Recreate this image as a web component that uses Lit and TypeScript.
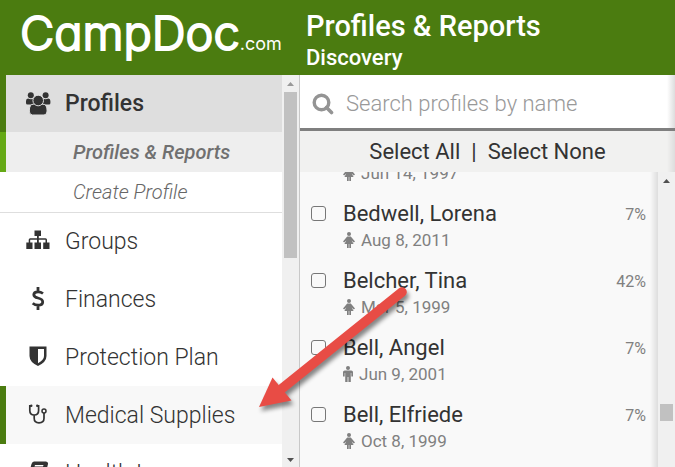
import { LitElement, html, css, svg, nothing } from "lit";
import { customElement } from "lit/decorators.js";
import { classMap } from "lit/directives/class-map.js";

const icons: Record<string, unknown> = {
  users: svg`<circle cx="4.800" cy="3.200" r="3"/><circle cx="19.600" cy="3.200" r="3"/><path d="M0 11V9Q0 6.500 2 6.500Q5 8 8 6.500V12.500H1.500Q0 12.500 0 11ZM24.400 11V9Q24.400 6.500 22.400 6.500Q19.400 8 16.400 6.500V12.500H22.900Q24.400 12.500 24.400 11Z"/><path stroke="#dedede" d="M3.300 19Q3.300 12 7.500 12.200H16.900Q21.100 12 21.100 19Q21.100 23 18 23H6.500Q3.300 23 3.300 19Z"/><circle stroke="#dedede" cx="12.200" cy="8.500" r="5.300"/>`,
  groups: svg`<path d="M8.500 1.500H15V7H12.800V9.200H19.500Q21 9.200 21 10.700V13.500H23.500V20H17.200V13.500H19.500V10.800H12.800V13.500H15V20H8.500V13.500H11V10.800H4.200V13.500H6.500V20H.300V13.500H2.700V10.700Q2.700 9.200 4.200 9.200H11V7H8.500Z"/>`,
  money: svg`<path d="M17 6.500Q14.800 4.800 12 4.800Q7.800 4.800 7.800 7.700Q7.800 10 12 11Q16.700 12.200 16.700 15Q16.700 18.200 12.200 18.200Q9 18.200 6.700 16.200M12 0V5M12 18V23" fill="none" stroke="currentColor" stroke-width="2.800"/>`,
  shield: svg`<path fill-rule="evenodd" d="M3.500 1.500H20.500V11Q20.500 17 12 21Q3.500 17 3.500 11ZM12 4V18.200Q18 15 18 11V4Z"/>`,
  stethoscope: svg`<path d="M5.200 2.800H3.800V7.500Q3.800 12 8.200 12Q12.600 12 12.600 7.500V2.800H11.200M8.200 12V15.200Q8.200 19.800 13 19.800Q18 19.800 18 15.200V10" fill="none" stroke="currentColor" stroke-width="1.700"/><circle cx="5.300" cy="2.800" r="1.200"/><circle cx="11.200" cy="2.800" r="1.200"/><circle cx="18" cy="8" r="2" fill="none" stroke="currentColor" stroke-width="1.500"/>`,
  book: svg`<path fill-rule="evenodd" d="M8 .500H20Q22.500 1 22 3L18.500 17Q18 20 15 20H4Q1 19 2 16L5.500 3Q6.200 .500 8 .500ZM9 4L8.500 5.500H17L17.500 4ZM8 7.500L7.500 9H16L16.500 7.500Z"/>`,
};

interface NavItem {
  label: string;
  icon: string;
  hover?: boolean;
}

const navItems: NavItem[] = [
  { label: "Groups", icon: "groups" },
  { label: "Finances", icon: "money" },
  { label: "Protection Plan", icon: "shield" },
  { label: "Medical Supplies", icon: "stethoscope", hover: true },
  { label: "Health Logs", icon: "book" },
];

interface Profile {
  name?: string;
  born: string;
  sex: "f" | "m";
  done?: string;
}

const profiles: Profile[] = [
  { born: "Jun 14, 1997", sex: "f" },
  { name: "Bedwell, Lorena", born: "Aug 8, 2011", sex: "f", done: "7%" },
  { name: "Belcher, Tina", born: "Mar 5, 1999", sex: "f", done: "42%" },
  { name: "Bell, Angel", born: "Jun 9, 2001", sex: "m", done: "7%" },
  { name: "Bell, Elfriede", born: "Oct 8, 1999", sex: "f", done: "7%" },
];

@customElement("side-nav")
export class SideNav extends LitElement {
  static styles = css`
    :host { display: flex; min-height: 0; overflow: hidden; border-right: 1px solid #c8c8c8; background: #fff; }
    nav { flex: 1; min-width: 0; overflow: hidden; }
    a { display: flex; align-items: center; height: 58px; box-sizing: border-box; padding-left: 20px;
      border-left: 6px solid transparent; color: #333; text-decoration: none; font-size: 23px; font-weight: 300; white-space: nowrap; }
    .icon { width: 24px; height: 24px; flex: none; margin-right: 15px; fill: currentColor; overflow: visible; }
    .section { height: 57px; background: #dedede; border-color: #4b7c10; font-weight: 500; }
    .sub { height: 40px; padding-left: 67px; font-size: 20px; font-style: italic; color: #666; }
    .current { background: #eee; border-color: #65a915; font-weight: 500; color: #707070; }
    .hover { background: #f8f8f8; border-color: #4b7c10; }
    .rest { box-shadow: inset 0 1px #dedede; }
    .track { width: 17px; flex: none; background: #f0f0f0; display: flex; flex-direction: column; align-items: center; }
    .arrow { width: 7px; height: 4px; margin: 7px 0 6px; fill: #999; }
    .thumb { width: 13px; height: 166px; background: #c1c1c1; }
    .down { margin: auto 0 5px; fill: #505050; }
  `;
  icon(name: string) {
    return html`<svg class="icon" viewBox="0 0 24 24" aria-hidden="true">${icons[name]}</svg>`;
  }
  render() {
    return html`
      <nav aria-label="Main">
        <a class="section" href="#profiles">${this.icon("users")}Profiles</a>
        <a class="sub current" href="#reports" aria-current="page">Profiles &amp; Reports</a>
        <a class="sub" href="#create">Create Profile</a>
        <div class="rest">
          ${navItems.map((n) => html`<a class=${classMap({ hover: !!n.hover })} href="#${n.icon}">${this.icon(n.icon)}${n.label}</a>`)}
        </div>
      </nav>
      <div class="track" aria-hidden="true">
        <svg class="arrow" viewBox="0 0 7 4"><path d="M0 4L3.500 0L7 4Z"/></svg>
        <div class="thumb"></div>
        <svg class="arrow down" viewBox="0 0 7 4"><path d="M0 0L3.500 4L7 0Z"/></svg>
      </div>`;
  }
}

@customElement("profile-list")
export class ProfileList extends LitElement {
  static styles = css`
    :host { display: flex; flex-direction: column; min-width: 0; min-height: 0; background: #f9f9f9; }
    .search { display: flex; align-items: center; height: 53px; padding: 4px 12px 0; background: linear-gradient(to left, #ddd, #fff 8px); box-sizing: border-box; }
    .glass { width: 22px; height: 22px; flex: none; fill: none; stroke: #949494; margin-right: 12px; }
    input[type="search"] { flex: 1; min-width: 0; border: 0; padding: 0; background: none; outline: 0; font: 300 22px Roboto, sans-serif; color: #333; }
    input::placeholder { color: #999; opacity: 1; }
    .picks { display: flex; align-items: center; justify-content: center; gap: 11px; height: 44px; box-sizing: border-box;
      border-top: 3px solid #7f7f7f; background: linear-gradient(to left, #ddd, #f1f1f0 8px); font-size: 22px; color: #333; }
    .picks button { border: 0; padding: 0; background: none; font: inherit; color: inherit; cursor: pointer; }
    .body { flex: 1; min-height: 0; display: flex; overflow: hidden; }
    .scroll { flex: 1; min-width: 0; overflow: hidden; display: flex; flex-direction: column; justify-content: flex-end; background: linear-gradient(to left, #ddd, #f9f9f9 8px); }
    ul { margin: 0; padding: 0 0 11px; list-style: none; }
    li { display: flex; align-items: flex-start; height: 67px; box-sizing: border-box; padding: 12px 12px 0 11px; }
    input[type="checkbox"] { appearance: none; width: 15px; height: 15px; margin: 6px 17px 0 0; box-sizing: border-box; border: 1px solid #777; border-radius: 3px; background: none; flex: none; }
    .who { flex: 1; min-width: 0; }
    label { display: block; height: 28px; font-size: 22px; line-height: 28px; color: #333; white-space: nowrap; }
    .born { display: flex; align-items: center; gap: 6px; font-size: 17px; line-height: 24px; color: #808080; }
    .sex { width: 12px; height: 16px; fill: currentColor; }
    .m { width: 10px; }
    .done { font-size: 16px; line-height: 30px; color: #808080; }
    .track { width: 17px; flex: none; background: #f0f0f0; display: flex; flex-direction: column; align-items: center; }
    .arrow { width: 7px; height: 4px; margin-top: 7px; fill: #505050; }
    .thumb { width: 13px; height: 17px; margin: auto 0 46px; background: #c1c1c1; }
  `;
  sex(kind: string) {
    return kind === "f"
      ? html`<svg class="sex" viewBox="0 0 12 16" role="img" aria-label="Female"><circle cx="6" cy="2" r="2"/><path d="M4.200 4.400H7.800L12 9.500L10.800 10.500L8.700 8.500L10.600 12H8V16H6.300V12H5.700V16H4V12H1.400L3.300 8.500L1.200 10.500L0 9.500Z"/></svg>`
      : html`<svg class="sex m" viewBox="0 0 10 16" role="img" aria-label="Male"><circle cx="5" cy="2" r="2"/><path d="M1.800 4.400H8.200Q10 4.400 10 6V10.500H8.300V7H7.800V16H5.400V11H4.600V16H2.200V7H1.700V10.500H0V6Q0 4.400 1.800 4.400Z"/></svg>`;
  }
  render() {
    return html`
      <div class="search">
        <svg class="glass" viewBox="0 0 22 22" aria-hidden="true"><circle cx="9.500" cy="9.500" r="7.300" stroke-width="3.400"/><path d="M14.500 14.500L19.500 19.500" stroke-width="3.600" stroke-linecap="round"/></svg>
        <input type="search" placeholder="Search profiles by name" aria-label="Search profiles by name" />
      </div>
      <div class="picks"><button>Select All</button><span>|</span><button>Select None</button></div>
      <div class="body">
        <div class="scroll">
          <ul>
            ${profiles.map((p, i) => html`<li>
              <input type="checkbox" id="p${i}" aria-label=${p.name ? nothing : p.born} />
              <div class="who"><label for="p${i}">${p.name}</label><div class="born">${this.sex(p.sex)}<span>${p.born}</span></div></div>
              <span class="done">${p.done}</span>
            </li>`)}
          </ul>
        </div>
        <div class="track" aria-hidden="true">
          <svg class="arrow" viewBox="0 0 7 4"><path d="M0 4L3.500 0L7 4Z"/></svg>
          <div class="thumb"></div>
        </div>
      </div>`;
  }
}

@customElement("app-root")
export class AppRoot extends LitElement {
  static styles = css`
    :host { position: relative; display: grid; grid-template: 75px minmax(0, 1fr) / 300px minmax(0, 1fr); height: 100vh; overflow: hidden; background: #fff; font-family: Roboto, sans-serif; }
    header { grid-column: 1 / -1; display: grid; grid-template-columns: subgrid; background: #4b7c10; color: #fff; }
    .logo { display: flex; align-items: baseline; padding: 5px 0 0 20px; color: #fff; text-decoration: none; font: 300 47px/56px Inter, sans-serif; font-feature-settings: "cv11"; -webkit-text-stroke: 2px #fff; stroke-linejoin: round; }
    .tld { font-size: 18px; font-weight: 400; -webkit-text-stroke: 0; }
    .title { padding: 9px 0 0 6px; }
    h1, h2 { margin: 0; font-weight: 500; white-space: nowrap; }
    h1 { font-size: 29px; line-height: 34px; }
    h2 { font-size: 22px; line-height: 30px; }
    .pointer { position: absolute; left: 250px; top: 280px; width: 170px; height: 140px; pointer-events: none; filter: drop-shadow(2px 4px 2px #0007); }
  `;
  render() {
    return html`
      <header>
        <a class="logo" href="#home"><span>CampDoc</span><span class="tld">.com</span></a>
        <div class="title"><h1>Profiles &amp; Reports</h1><h2>Discovery</h2></div>
      </header>
      <side-nav></side-nav>
      <profile-list></profile-list>
      <svg class="pointer" viewBox="250 280 170 140" aria-hidden="true">
        <path d="M282 388.500L402 292" stroke="#e84c45" stroke-width="9.600" stroke-linecap="round"/>
        <path d="M259 407L272.500 377.500L291.500 400.500Z" fill="#e84c45"/>
      </svg>`;
  }
}
